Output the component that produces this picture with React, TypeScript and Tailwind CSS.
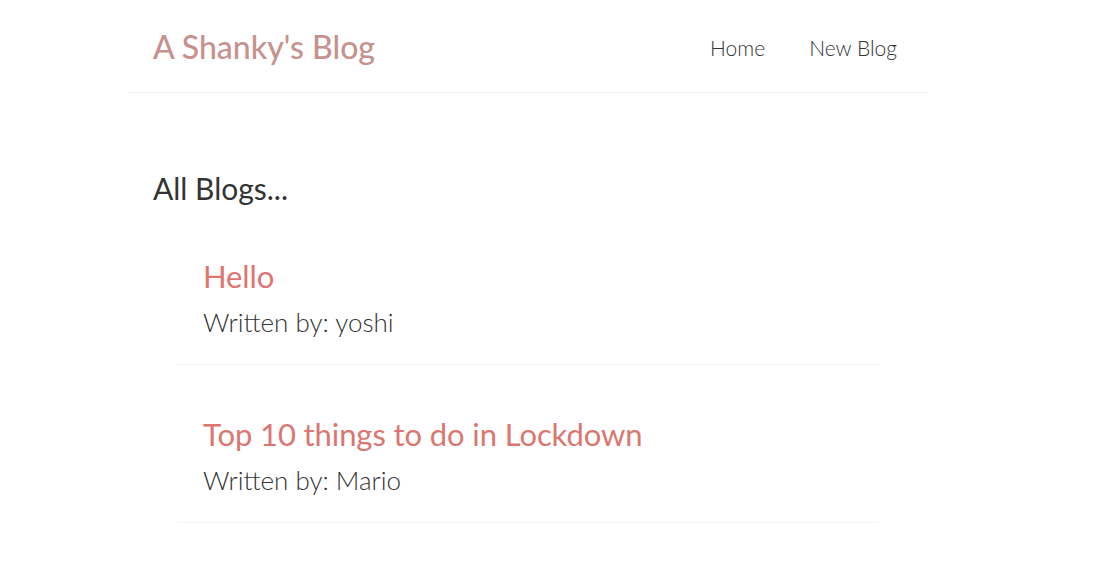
export default function App() {
  const blogs = [
    { title: "Hello", author: "yoshi" },
    { title: "Top 10 things to do in Lockdown", author: "Mario" },
  ];
  return (
    <div
      className="min-h-screen bg-white text-[#333]"
      style={{ fontFamily: "Lato, 'Open Sans', sans-serif" }}
    >
      <nav className="ml-[128px] flex h-[93px] w-[800px] items-center border-b border-[#ececec] pt-[2px] pl-[25px] pr-[31px]">
        <h1 className="text-[32px] font-medium leading-[32px] text-[#c7918d]">A Shanky's Blog</h1>
        <div className="ml-auto flex gap-[44px] text-[21px] font-light leading-[21px] text-[#333]">
          <a href="#">Home</a>
          <a href="#">New Blog</a>
        </div>
      </nav>
      <div className="ml-[128px] w-[800px] px-[25px]">
        <h2 className="mt-[79px] text-[30px] font-normal leading-[32px] text-[#333]">All Blogs...</h2>
        <div className="flex flex-col gap-[23px] px-[25px] pt-[26px]">
          {blogs.map((b) => (
            <div key={b.title} className="border-b border-[#f4f4f4] px-[25px] pt-[30px] pb-[29px]">
              <h2 className="text-[31px] font-normal leading-[32px] tracking-[-0.1px] text-[#db7670]">{b.title}</h2>
              <p className="mt-[17px] text-[26px] font-light leading-[26px] text-[#333]">Written by: {b.author}</p>
            </div>
          ))}
        </div>
      </div>
    </div>
  );
}
